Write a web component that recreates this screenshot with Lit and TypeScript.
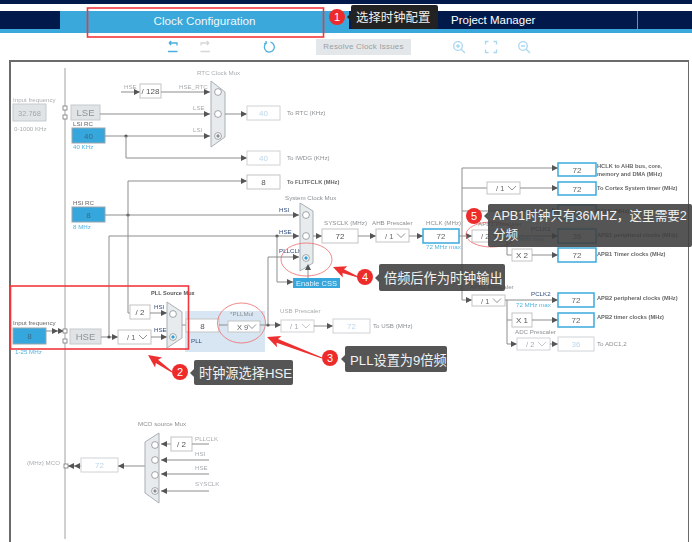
import { LitElement, html, css, svg } from 'lit';
import { customElement } from 'lit/decorators.js';

// small drawing helpers for the clock tree, everything is in page coordinates
const line = (d: string, cls = 'wire') => svg`<path class=${cls} d=${d}></path>`;

const head = (x: number, y: number, dir: 'r' | 'l' | 'u' = 'r') => {
    if (dir === 'r') return svg`<polygon class="head" points="${x},${y} ${x - 6},${y - 3} ${x - 6},${y + 3}"></polygon>`;
    if (dir === 'l') return svg`<polygon class="head" points="${x},${y} ${x + 6},${y - 3} ${x + 6},${y + 3}"></polygon>`;
    return svg`<polygon class="head" points="${x},${y} ${x - 3},${y + 6} ${x + 3},${y + 6}"></polygon>`;
};

const dot = (x: number, y: number) => svg`<circle class="dot" cx=${x} cy=${y} r="1.6"></circle>`;

const label = (x: number, y: number, t: string, cls = 'lbl') =>
    svg`<text class=${cls} x=${x} y=${y}>${t}</text>`;

const box = (x: number, y: number, w: number, h: number, t: string, cls = 'box') => svg`
    <rect class=${cls} x=${x} y=${y} width=${w} height=${h}></rect>
    <text class="${cls}-t" x=${x + w / 2} y=${y + h / 2 + 3} text-anchor="middle">${t}</text>`;

const select = (x: number, y: number, w: number, h: number, t: string, pale = false) => svg`
    <rect class=${pale ? 'box-pale' : 'box'} x=${x} y=${y} width=${w} height=${h}></rect>
    <text class=${pale ? 'sel-pale' : 'sel'} x=${x + 9} y=${y + h / 2 + 3}>${t}</text>
    <path class=${pale ? 'chev-pale' : 'chev'} d="M${x + w - 12} ${y + h / 2 - 2}l4 4l4 -4"></path>`;

const mux = (points: string, knobs: [number, number, string?][]) => svg`
    <polygon class="mux" points=${points}></polygon>
    ${knobs.map(([x, y, on]) => svg`
        <circle class="knob" cx=${x} cy=${y} r="3.4"></circle>
        ${on ? svg`<circle class=${on} cx=${x} cy=${y} r="1.7"></circle>` : ''}`)}`;

const pin = (x: number, y: number) => svg`<rect class="pin" x=${x - 2} y=${y - 2} width="4" height="4"></rect>`;

const clockTree = svg`
    <rect class="pll" x="185" y="311" width="80" height="41"></rect>
    ${line('M65 68V539', 'rail')}

    <!-- low speed sources and RTC mux -->
    ${label(13, 102, 'Input frequency', 'lbl-pale')}
    ${box(13, 104, 33, 17, '32.768', 'off')}
    ${label(14, 131, '0-1000 KHz', 'lbl-pale')}
    ${pin(65, 108)}${pin(65, 117)}
    ${box(71, 105, 29, 15, 'LSE', 'off-big')}
    ${label(73, 126, 'LSI RC')}
    ${box(72, 128, 33, 15, '40', 'src')}
    ${label(73, 149, '40 KHz', 'lbl-blue')}
    ${label(124, 89, 'HSE', 'lbl-pale')}
    ${line('M121 92H140')}${head(140, 92)}
    ${box(140, 84, 21, 14, '/ 128')}
    ${label(179, 89, 'HSE_RTC', 'lbl-pale')}
    ${line('M161 92H210')}${head(210, 92)}
    ${label(193, 110, 'LSE', 'lbl-pale')}
    ${line('M100 114H210')}${head(210, 114)}
    ${label(193, 132, 'LSI', 'lbl-pale')}
    ${line('M105 136H210')}${head(210, 136)}
    ${dot(126, 136)}
    ${line('M126 136V158H247')}${head(247, 158)}
    ${label(197, 75, 'RTC Clock Mux', 'lbl-pale')}
    ${mux('211,81 225,92 225,137 211,147', [[218, 92], [218, 114], [218, 136, 'on-grey']])}
    ${line('M225 114H247')}${head(247, 114)}
    ${box(247, 106, 33, 14, '40', 'box-pale')}
    ${label(287, 115, 'To RTC (KHz)', 'lbl-grey')}
    ${box(247, 151, 33, 14, '40', 'box-pale')}
    ${label(287, 160, 'To IWDG (KHz)', 'lbl-grey')}
    ${line('M128 181H247')}${head(247, 181)}
    ${box(247, 175, 33, 14, '8')}
    ${label(287, 184, 'To FLITFCLK (MHz)', 'lbl-dark')}

    <!-- HSI and the PLL input -->
    ${label(73, 205, 'HSI RC')}
    ${box(72, 207, 33, 15, '8', 'src')}
    ${label(73, 229, '8 MHz', 'lbl-blue')}
    ${line('M105 215H299')}${head(299, 215)}
    ${dot(128, 215)}
    ${line('M128 181V313H130')}
    ${line('M109 337V236H299')}${head(299, 236)}
    ${label(13, 325, 'Input frequency')}
    ${box(13, 328, 33, 16, '8', 'src')}
    ${label(15, 354, '1-25 MHz', 'lbl-blue')}
    ${line('M46 331H65')}${head(58, 331)}${head(64, 331)}
    ${pin(65, 331)}${pin(65, 341)}
    ${box(70, 329, 31, 15, 'HSE', 'off-big')}
    ${line('M101 337H118')}${dot(109, 337)}${head(118, 337)}
    ${select(118, 330, 33, 14, '/ 1')}
    ${line('M151 337H167')}${head(167, 337)}
    ${box(130, 305, 20, 14, '/ 2')}
    ${line('M150 313H167')}${head(167, 313)}
    ${label(154, 309, 'HSI', 'lbl-navy')}
    ${label(154, 332, 'HSE', 'lbl-navy')}
    ${label(151, 295, 'PLL Source Mux', 'lbl-strong')}
    ${mux('167,302 182,312 182,338 167,348', [[173, 314], [173, 337, 'on-blue']])}
    ${line('M182 325H186')}
    ${box(186, 319, 33, 13, '8')}
    ${label(230, 316, '*PLLMul', 'lbl-grey')}
    ${line('M219 325H228')}
    ${select(228, 321, 32, 11, 'X 9')}
    ${label(191, 343, 'PLL', 'lbl-navy')}
    ${line('M260 325H281')}${dot(268, 325)}${head(281, 325)}
    ${line('M268 325V257H299')}${head(299, 257)}

    <!-- USB -->
    ${label(280, 313, 'USB Prescaler', 'lbl-pale')}
    ${select(281, 320, 33, 12, '/ 1', true)}
    ${line('M314 326H333')}${head(333, 326)}
    ${box(333, 319, 37, 14, '72', 'box-pale')}
    ${label(373, 328, 'To USB (MHz)', 'lbl-grey')}

    <!-- system clock mux -->
    ${label(285, 200, 'System Clock Mux', 'lbl-grey')}
    ${label(279, 212, 'HSI', 'lbl-navy')}
    ${label(279, 234, 'HSE', 'lbl-navy')}
    ${label(279, 253, 'PLLCLK', 'lbl-navy')}
    ${dot(277, 236)}
    ${line('M277 236V282H293')}${head(293, 282)}
    ${mux('300,203 313,211 313,263 300,271', [[306, 215], [306, 236], [306, 258, 'on-blue']])}
    ${line('M308 278V268')}${head(308, 264, 'u')}
    ${box(293, 278, 47, 10, 'Enable CSS', 'css')}
    ${line('M313 236H322')}${head(322, 236)}
    ${label(324, 225, 'SYSCLK (MHz)', 'lbl-grey')}
    ${box(322, 229, 36, 14, '72')}
    ${line('M358 236H376')}${head(376, 236)}
    ${label(372, 225, 'AHB Prescaler', 'lbl-grey')}
    ${select(376, 229, 33, 13, '/ 1')}
    ${line('M409 236H423')}${head(423, 236)}
    ${label(426, 225, 'HCLK (MHz)', 'lbl-grey')}
    ${box(423, 229, 36, 14, '72', 'out')}
    ${label(426, 249, '72 MHz max', 'lbl-blue')}

    <!-- bus clocks -->
    ${line('M459 236H472')}${head(472, 236)}
    ${line('M462 168V300H472')}${head(472, 300)}
    ${line('M462 168H558')}${head(558, 168)}
    ${line('M462 188H487')}
    ${select(487, 182, 33, 12, '/ 1')}
    ${line('M520 188H558')}${head(558, 188)}
    ${line('M462 211H558')}${head(558, 211)}
    ${box(558, 163, 38, 13, '72', 'out')}
    ${label(597, 168, 'HCLK to AHB bus, core,', 'lbl-dark')}
    ${label(597, 176, 'memory and DMA (MHz)', 'lbl-dark')}
    ${box(558, 182, 38, 13, '72', 'out')}
    ${label(597, 190, 'To Cortex System timer (MHz)', 'lbl-dark')}
    ${box(558, 205, 38, 14, '72', 'out')}
    ${label(597, 213, 'FCLK (MHz)', 'lbl-dark')}
    ${label(478, 226, 'APB1 Prescaler', 'lbl-grey')}
    ${select(472, 230, 33, 12, '/ 2')}
    ${label(531, 231, 'PCLK1', 'lbl-navy')}
    ${line('M505 236H558')}${head(558, 236)}
    ${label(510, 241, '36 MHz max', 'lbl-blue')}
    ${box(558, 229, 38, 14, '36', 'out')}
    ${label(597, 237, 'APB1 peripheral clocks (MHz)', 'lbl-dark')}
    ${line('M507 236V255H512')}
    ${box(512, 249, 20, 12, 'X 2')}
    ${line('M532 255H558')}${head(558, 255)}
    ${box(558, 248, 38, 14, '72', 'out')}
    ${label(597, 256, 'APB1 Timer clocks (MHz)', 'lbl-dark')}
    ${label(470, 289, 'APB2 Prescaler', 'lbl-grey')}
    ${select(472, 295, 33, 11, '/ 1')}
    ${label(531, 296, 'PCLK2', 'lbl-navy')}
    ${line('M505 300H558')}${head(558, 300)}
    ${label(516, 307, '72 MHz max', 'lbl-blue')}
    ${box(558, 293, 36, 14, '72', 'out')}
    ${label(597, 300, 'APB2 peripheral clocks (MHz)', 'lbl-dark')}
    ${line('M507 300V344H517')}${head(517, 344)}
    ${line('M507 320H512')}
    ${box(512, 313, 20, 14, 'X 1')}
    ${line('M532 320H558')}${head(558, 320)}
    ${box(558, 313, 36, 14, '72', 'out')}
    ${label(597, 319, 'APB2 timer clocks (MHz)', 'lbl-dark')}
    ${label(515, 334, 'ADC Prescaler', 'lbl-grey')}
    ${select(517, 338, 33, 12, '/ 2', true)}
    ${line('M550 344H558')}${head(558, 344)}
    ${box(558, 337, 36, 14, '36', 'box-pale')}
    ${label(597, 346, 'To ADC1,2', 'lbl-grey')}

    <!-- MCO -->
    ${label(27, 465, '(MHz) MCO', 'lbl-pale')}
    ${pin(66, 466)}
    ${line('M68 466H81')}${head(68, 466, 'l')}${head(74, 466, 'l')}
    ${box(81, 458, 37, 14, '72', 'box-pale')}
    ${line('M118 466H145')}${head(118, 466, 'l')}
    ${label(138, 426, 'MCO source Mux', 'lbl-grey')}
    ${mux('145,442 159,433 159,503 145,493', [[155, 445], [155, 460], [155, 475], [155, 491, 'on-grey']])}
    ${line('M161 444H171')}${head(161, 444, 'l')}
    ${box(171, 437, 21, 14, '/ 2')}
    ${line('M192 444H209')}
    ${label(195, 441, 'PLLCLK', 'lbl-pale')}
    ${line('M161 460H209')}${head(161, 460, 'l')}
    ${label(195, 456, 'HSI', 'lbl-pale')}
    ${line('M161 474H209')}${head(161, 474, 'l')}
    ${label(195, 470, 'HSE', 'lbl-pale')}
    ${line('M161 491H209')}${head(161, 491, 'l')}
    ${label(195, 486, 'SYSCLK', 'lbl-pale')}
`;

// tapered red callout arrow, from a thin tail to a flared head
const redArrow = (tx: number, ty: number, fx: number, fy: number) => {
    const len = Math.hypot(fx - tx, fy - ty);
    const ux = (fx - tx) / len;
    const uy = (fy - ty) / len;
    const nx = -uy;
    const ny = ux;
    const p = (along: number, side: number) =>
        `${(tx + ux * along + nx * side).toFixed(1)},${(ty + uy * along + ny * side).toFixed(1)}`;
    return svg`<polygon class="red-fill" points="${p(0, 0)} ${p(13, 6)} ${p(11, 2)} ${p(len, 0.6)} ${p(len, -0.6)} ${p(11, -2)} ${p(13, -6)}"></polygon>`;
};

const marks = svg`
    <rect class="red" x="87.5" y="8" width="236" height="29"></rect>
    <rect class="red" x="10.5" y="286" width="178" height="63"></rect>
    <ellipse class="thin" cx="241.5" cy="323" rx="24" ry="20"></ellipse>
    <ellipse class="thin" cx="306.5" cy="259.5" rx="25.5" ry="16.5"></ellipse>
    <ellipse class="thin" cx="491.5" cy="234.5" rx="25.5" ry="12.5"></ellipse>
    ${redArrow(148, 355, 172, 372)}
    ${redArrow(267, 337, 322, 358)}
    ${redArrow(333, 267, 358, 277)}
`;

interface Note {
    n: number;
    cx: number;
    cy: number;
    x: number;
    y: number;
    w: number;
    h: number;
    text: string;
    wide?: boolean;
    dark?: boolean;
}

const notes: Note[] = [
    { n: 1, cx: 337, cy: 17, x: 351, y: 5, w: 87, h: 24, text: '选择时钟配置', dark: true },
    { n: 2, cx: 180, cy: 372, x: 194, y: 360, w: 99, h: 25, text: '时钟源选择HSE' },
    { n: 3, cx: 330, cy: 358, x: 345, y: 346, w: 102, h: 26, text: 'PLL设置为9倍频' },
    { n: 4, cx: 365, cy: 277, x: 379, y: 264, w: 126, h: 27, text: '倍频后作为时钟输出' },
    { n: 5, cx: 474, cy: 216, x: 488, y: 204, w: 204, h: 43, text: 'APB1时钟只有36MHZ，这里需要2\n分频', wide: true },
];

@customElement('app-root')
export class AppRoot extends LitElement {
    static styles = css`
        :host {
            display: block;
            position: relative;
            width: 692px;
            height: 542px;
            overflow: hidden;
            background: #fff;
            font-family: 'Liberation Sans', 'Noto Sans CJK SC', sans-serif;
        }

        .strip {
            height: 4px;
            background: #02194b;
        }

        .tabs {
            display: flex;
            height: 18px;
            margin-top: 7px;
            padding-left: 60px;
            background: #02194b;
            border-bottom: 4px solid #3aa8da;
            color: #fff;
        }

        .tab {
            display: flex;
            justify-content: center;
            align-items: center;
        }

        .tab.active {
            width: 289px;
            height: 22px;
            padding-bottom: 3px;
            box-sizing: border-box;
            background: #3aa8da;
            color: #eef8fd;
            font-size: 11.7px;
        }

        .tab.pm {
            width: 289px;
            padding-left: 102px;
            box-sizing: border-box;
            justify-content: flex-start;
            border-right: 1px solid #7b8aa8;
            font-size: 11.5px;
        }

        .toolbar {
            display: flex;
            align-items: center;
            height: 27px;
            padding-left: 166px;
            box-sizing: border-box;
        }

        .toolbar svg {
            width: 14px;
            height: 14px;
            fill: none;
            stroke: #4aaede;
            stroke-width: 1.3;
            flex: none;
        }

        .toolbar .idle {
            stroke: #d5d8da;
        }

        .toolbar .light {
            stroke: #a9d8f0;
        }

        .redo {
            margin-left: 18px;
        }

        .reset {
            margin-left: 50px;
        }

        .resolve {
            width: 95px;
            height: 16px;
            margin-left: 40px;
            background: #e4e7ea;
            color: #9a9ea2;
            font-size: 8px;
            letter-spacing: 0.2px;
            line-height: 16px;
            text-align: center;
            flex: none;
        }

        .zin {
            margin-left: 41px;
        }

        .fit {
            margin-left: 18px;
        }

        .zout {
            margin-left: 19px;
        }

        .panel {
            width: 680px;
            height: 500px;
            margin-left: 9px;
            box-sizing: border-box;
            border: 2px solid #6b6b6b;
            border-right-width: 1px;
        }

        .panel svg {
            display: block;
            filter: blur(0.35px);
        }

        .panel text {
            font-family: 'Liberation Sans', sans-serif;
            font-size: 6.2px;
        }

        .wire {
            fill: none;
            stroke: #8d8d8d;
            stroke-width: 1;
        }

        .rail {
            fill: none;
            stroke: #a2a2a2;
            stroke-width: 1;
        }

        .head {
            fill: #555;
        }

        .dot {
            fill: #555;
        }

        .pin {
            fill: #fff;
            stroke: #777;
            stroke-width: 0.8;
        }

        .pll {
            fill: #d8e6f3;
        }

        .box,
        .box-pale {
            fill: #fff;
            stroke: #c4c4c4;
            stroke-width: 1;
        }

        .panel .box-t {
            fill: #555;
            font-size: 8px;
        }

        .panel .box-pale-t {
            fill: #bcd6ea;
            font-size: 8px;
        }

        .box-pale {
            stroke: #cfd2d5;
        }

        .off,
        .off-big {
            fill: #e1e4e7;
            stroke: #c6cacd;
        }

        .panel .off-t {
            fill: #a5a8ab;
            font-size: 7.5px;
        }

        .panel .off-big-t {
            fill: #8f9397;
            font-size: 9.5px;
        }

        .src {
            fill: #35a7dc;
            stroke: #9aa5ab;
        }

        .panel .src-t {
            fill: #3b6a86;
            font-size: 8px;
        }

        .out {
            fill: #fff;
            stroke: #3ba9dc;
            stroke-width: 1.5;
        }

        .panel .out-t {
            fill: #666;
            font-size: 8px;
        }

        .css {
            fill: #35a7dc;
        }

        .panel .css-t {
            fill: #e3f4fc;
            font-size: 7.5px;
        }

        .panel .sel {
            fill: #666;
            font-size: 7.5px;
        }

        .panel .sel-pale {
            fill: #a9adb0;
            font-size: 7.5px;
        }

        .chev,
        .chev-pale {
            fill: none;
            stroke: #777;
            stroke-width: 0.8;
        }

        .chev-pale {
            stroke: #bbb;
        }

        .mux {
            fill: #e7ebee;
            stroke: #a9afb3;
            stroke-width: 1;
        }

        .knob {
            fill: #fff;
            stroke: #8b8f92;
            stroke-width: 0.8;
        }

        .on-grey {
            fill: #8b8f92;
        }

        .on-blue {
            fill: #2e9fd8;
        }

        .lbl {
            fill: #666;
        }

        .lbl-pale {
            fill: #a9adb0;
        }

        .lbl-grey {
            fill: #8b8f92;
        }

        .panel .lbl-dark {
            fill: #666;
            font-size: 5.7px;
            font-weight: bold;
        }

        .panel .lbl-strong {
            fill: #555;
            font-size: 5.6px;
            font-weight: bold;
        }

        .lbl-blue {
            fill: #52b4e2;
        }

        .lbl-navy {
            fill: #33507f;
        }

        .marks {
            position: absolute;
            left: 0;
            top: 0;
            pointer-events: none;
        }

        .red {
            fill: none;
            stroke: #f0383c;
            stroke-width: 1.6;
        }

        .thin {
            fill: none;
            stroke: #ef6a6a;
            stroke-width: 0.8;
        }

        .red-fill {
            fill: #ee2f2f;
        }

        .note {
            position: absolute;
            box-sizing: border-box;
            padding: 0 5px;
            display: flex;
            align-items: center;
            background: rgba(62, 62, 62, 0.88);
            border-radius: 2px;
            color: #f2f2f2;
            font-size: 13.2px;
            white-space: nowrap;
        }

        .note::before {
            content: '';
            position: absolute;
            left: -4px;
            top: calc(50% - 4px);
            border-style: solid;
            border-width: 4px 4px 4px 0;
            border-color: transparent rgba(62, 62, 62, 0.88) transparent transparent;
        }

        .note.dark {
            background: #222;
            font-size: 12.4px;
            color: #eee;
        }

        .note.dark::before {
            border-right-color: #222;
        }

        .note.wide {
            white-space: pre;
            line-height: 19px;
            padding: 1px 0 0 5px;
            font-size: 12.6px;
        }

        .note.wide::before {
            top: 8px;
        }

        .badge {
            position: absolute;
            width: 16px;
            height: 16px;
            border-radius: 50%;
            background: #ee2b2b;
            color: #fff;
            font-size: 11px;
            line-height: 16px;
            text-align: center;
        }
    `;

    render() {
        return html`
            <div class="strip"></div>
            <div class="tabs">
                <div class="tab active">Clock Configuration</div>
                <div class="tab pm">Project Manager</div>
            </div>
            <div class="toolbar">
                <svg viewBox="0 0 14 14"><path d="M3 3h8v2.5M3 3l2.2-2M3 3l2.2 2M2 11.5h9.5"></path></svg>
                <svg class="redo idle" viewBox="0 0 14 14"><path d="M11 3H3v2.5M11 3L8.8 1M11 3L8.8 5M2.5 11.5H12"></path></svg>
                <svg class="reset" viewBox="0 0 14 14"><path d="M8.5 2.2a5 5 0 1 1-4.2.9M4 1l.3 2.2L2.2 3.6"></path></svg>
                <div class="resolve">Resolve Clock Issues</div>
                <svg class="zin light" viewBox="0 0 14 14"><circle cx="6" cy="6" r="4.3"></circle><path d="M9.2 9.2L13 13M4 6h4M6 4v4"></path></svg>
                <svg class="fit light" viewBox="0 0 14 14"><path d="M1.5 4.500V1.500H4.500M9.500 1.500H12.500V4.500M12.500 9.500V12.500H9.500M4.500 12.500H1.500V9.500"></path></svg>
                <svg class="zout light" viewBox="0 0 14 14"><circle cx="6" cy="6" r="4.300"></circle><path d="M9.200 9.200L13 13M4 6h4"></path></svg>
            </div>
            <div class="panel">
                <svg width="677" height="480" viewBox="11 62 677 480">${clockTree}</svg>
            </div>
            <svg class="marks" width="692" height="542" viewBox="0 0 692 542">${marks}</svg>
            ${notes.map(
                (n) => html`
                    <div
                        class="note ${n.wide ? 'wide' : ''} ${n.dark ? 'dark' : ''}"
                        style="left:${n.x}px;top:${n.y}px;width:${n.w}px;height:${n.h}px"
                    >${n.wide ? html`<span>${n.text}</span>` : n.text}</div>
                    <div class="badge" style="left:${n.cx - 8}px;top:${n.cy - 8}px">${n.n}</div>
                `
            )}
        `;
    }
}
